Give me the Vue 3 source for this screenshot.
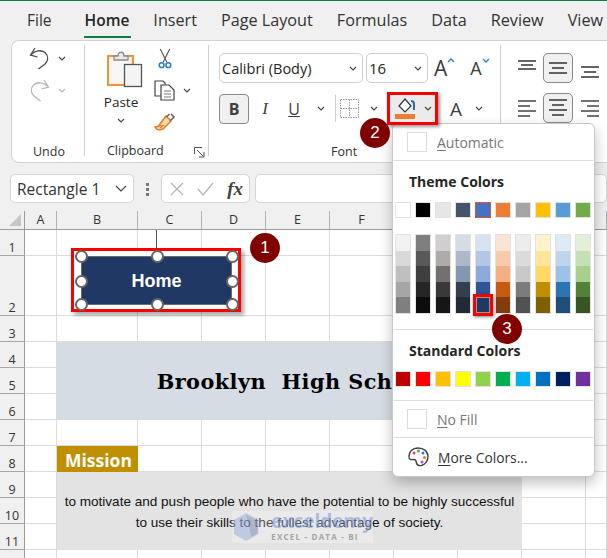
<script setup>
const tabs = ['File', 'Home', 'Insert', 'Page Layout', 'Formulas', 'Data', 'Review', 'View']
const colLabels = ['A', 'B', 'C', 'D', 'E', 'F', 'G', 'H', 'I', '']
const rowLabels = [1, 2, 3, 4, 5, 6, 7, 8, 9, 10, 11, 12]
const title = 'Brooklyn  High School'
const theme = ['#ffffff', '#000000', '#e7e6e6', '#44546a', '#4472c4', '#ed7d31', '#a5a5a5', '#ffc000', '#5b9bd5', '#70ad47']
const tints = [
  ['#f2f2f2', '#d9d9d9', '#bfbfbf', '#a6a6a6', '#7f7f7f'],
  ['#7f7f7f', '#595959', '#3f3f3f', '#262626', '#0d0d0d'],
  ['#d0cece', '#aeabab', '#757070', '#3a3838', '#171616'],
  ['#d6dce4', '#adb9ca', '#8497b0', '#333f4f', '#222b35'],
  ['#d9e2f3', '#b4c6e7', '#8eaadb', '#2f5496', '#1f3864'],
  ['#fbe4d5', '#f7caac', '#f4b083', '#c55a11', '#833c0b'],
  ['#ededed', '#dbdbdb', '#c9c9c9', '#7b7b7b', '#525252'],
  ['#fff2cc', '#ffe599', '#ffd966', '#bf8f00', '#7f6000'],
  ['#deeaf6', '#bdd6ee', '#9cc2e5', '#2e74b5', '#1f4e79'],
  ['#e2efd9', '#c5e0b3', '#a8d08d', '#538135', '#375623']
]
const standard = ['#c00000', '#ff0000', '#ffc000', '#ffff00', '#92d050', '#00b050', '#00b0f0', '#0070c0', '#002060', '#7030a0']
const handles = [
  ['h-l', 'h-t'], ['h-c', 'h-t'], ['h-r', 'h-t'],
  ['h-l', 'h-m'], ['h-r', 'h-m'],
  ['h-l', 'h-b'], ['h-c', 'h-b'], ['h-r', 'h-b']
]
</script>

<template>
  <div class="app">
    <nav class="tabs">
      <span v-for="t in tabs" :key="t" class="tab" :class="{ active: t === 'Home' }">{{ t }}</span>
    </nav>

    <section class="ribbon">
      <div class="group g-undo">
        <div class="undo-line">
          <svg width="21" height="23" viewBox="0 0 21 23" fill="none" stroke="#4a4a4a" stroke-width="1.3"><path d="M6 1 1.500 8 8.500 10" /><path d="M2 7.500C6 3.500 12 2.500 16 5.500 20 9.500 19 14 16 17L9.500 22" /></svg>
          <svg class="chev" viewBox="0 0 8 5"><path d="M1 1l3 3 3-3" /></svg>
        </div>
        <div class="undo-line faint">
          <svg width="21" height="23" viewBox="0 0 21 23" fill="none" stroke="#b5b5b5" stroke-width="1.300"><path d="M15 1 19.500 8 12.500 10" /><path d="M19 7.500C15 3.500 9 2.500 5 5.500 1 9.500 2 14 5 17L11.500 22" /></svg>
          <svg class="chev" viewBox="0 0 8 5"><path d="M1 1l3 3 3-3" /></svg>
        </div>
        <span class="group-label">Undo</span>
      </div>

      <div class="group g-clip">
        <div class="clip-top">
          <div class="paste">
            <svg width="36" height="38" viewBox="0 0 36 38">
              <rect x="1" y="6" width="25" height="29" fill="#fdf2dc" stroke="#ee9440" stroke-width="2" />
              <rect x="4" y="9" width="19" height="23" fill="#f7f7f7" />
              <path d="M7 10V6h4c0-5 6-5 6 0h4v4z" fill="#e9e9e9" stroke="#8a8a8a" stroke-width="1.300" />
              <rect x="17.500" y="14.500" width="17" height="22" fill="#f4f4f4" stroke="#555" stroke-width="1.300" />
            </svg>
            <span class="paste-label">Paste</span>
            <svg class="chev" viewBox="0 0 8 5"><path d="M1 1l3 3 3-3" /></svg>
          </div>
          <div class="clip-tools">
            <svg class="scissors" width="16" height="21" viewBox="0 0 16 22" fill="none">
              <path d="M3 1l7 14M13 1L6 15" stroke="#555" stroke-width="1.200" />
              <circle cx="4.500" cy="18" r="2.500" stroke="#2b7cd3" stroke-width="1.600" />
              <circle cx="11.500" cy="18" r="2.500" stroke="#2b7cd3" stroke-width="1.600" />
            </svg>
            <div class="copy-line">
              <svg width="21" height="21" viewBox="0 0 21 21" fill="none" stroke="#444" stroke-width="1.200">
                <path d="M8 16H1V1h8l2 2v2" />
                <path d="M7 5h8l5 5v10H7z" fill="#fff" />
                <path d="M10 11h7M10 14h7M10 17h7" stroke="#777" />
              </svg>
              <svg class="chev" viewBox="0 0 8 5"><path d="M1 1l3 3 3-3" /></svg>
            </div>
            <svg width="22" height="20" viewBox="0 0 22 20">
              <path d="M12 4l5 5-8 8c-3 1-6 2-8-2 3 0 4-1 5-3z" fill="#fbd9b4" stroke="#e67e22" stroke-width="1.500" />
              <path d="M12.500 5l3-3M16 9l4-4-3-3" fill="none" stroke="#666" stroke-width="1.600" />
              <path d="M3 15l5-2M6 16l4-3" stroke="#e67e22" stroke-width="1.200" />
            </svg>
          </div>
        </div>
        <div class="clip-foot">
          <span class="group-label">Clipboard</span>
          <svg width="11" height="11" viewBox="0 0 11 11" fill="none" stroke="#555" stroke-width="1"><path d="M.5 7V.5H8" /><path d="M3 3l6.500 6.500M10 5v5H5" /></svg>
        </div>
      </div>

      <div class="group g-font">
        <div class="font-row">
          <div class="select font-name"><span>Calibri (Body)</span><svg class="chev" viewBox="0 0 8 5"><path d="M1 1l3 3 3-3" /></svg></div>
          <div class="select font-size"><span>16</span><svg class="chev" viewBox="0 0 8 5"><path d="M1 1l3 3 3-3" /></svg></div>
          <span class="big-a grow">A<svg width="8" height="5" viewBox="0 0 8 5" fill="none" stroke="#2b7cd3" stroke-width="1.300"><path d="M1 4l3-3 3 3" /></svg></span>
          <span class="big-a shrink">A<svg width="8" height="5" viewBox="0 0 8 5" fill="none" stroke="#2b7cd3" stroke-width="1.300"><path d="M1 1l3 3 3-3" /></svg></span>
        </div>
        <div class="font-row row-two">
          <span class="fmt bold">B</span>
          <span class="fmt italic">I</span>
          <span class="fmt under">U</span>
          <svg class="chev c-u" viewBox="0 0 8 5"><path d="M1 1l3 3 3-3" /></svg>
          <span class="vsep"></span>
          <svg class="borders" width="19" height="19" viewBox="0 0 19 19" fill="none" stroke="#9a9a9a" stroke-dasharray="1.500 1"><path d="M.5.500h18v18H.5zM9.500.500v18M.5 9.500h18" /></svg>
          <svg class="chev c-b" viewBox="0 0 8 5"><path d="M1 1l3 3 3-3" /></svg>
          <div class="fill-btn">
            <div class="fill-icon">
              <svg class="bucket" width="18" height="15" viewBox="0 0 18 15" fill="none">
                <path d="M7 1l6 7-6 6-6-6z" stroke="#333" stroke-width="1.200" fill="#fff" />
                <path d="M16 12V6c0-2-1-3-3-3" stroke="#2b6cb8" stroke-width="2" />
              </svg>
              <span class="fill-bar"></span>
            </div>
            <svg class="chev" viewBox="0 0 8 5"><path d="M1 1l3 3 3-3" /></svg>
          </div>
          <span class="font-color">A</span>
          <svg class="chev c-a" viewBox="0 0 8 5"><path d="M1 1l3 3 3-3" /></svg>
        </div>
        <span class="group-label font-label">Font</span>
      </div>

      <div class="group g-align">
        <div class="align-row">
          <svg class="al" width="24" height="24" viewBox="0 0 24 24" stroke="#333" stroke-width="1.300"><path d="M1 5h18M4 9h12M1 13h18" /></svg>
          <span class="al-box"><svg width="18" height="14" viewBox="0 0 18 14" stroke="#333" stroke-width="1.300"><path d="M0 2h18M3 7h12M0 12h18" /></svg></span>
          <svg class="al" width="18" height="24" viewBox="0 0 18 24" stroke="#333" stroke-width="1.300"><path d="M0 11h18M3 16h12M0 21h18" /></svg>
        </div>
        <div class="align-row">
          <svg class="al" width="24" height="24" viewBox="0 0 24 24" stroke="#444" stroke-width="1.300"><path d="M1 5h18M1 10h12M1 15h18M1 20h12" /></svg>
          <span class="al-box"><svg width="18" height="18" viewBox="0 0 18 18" stroke="#333" stroke-width="1.300"><path d="M0 1h18M3 6h12M0 11h18M3 16h12" /></svg></span>
          <svg class="al" width="18" height="24" viewBox="0 0 18 24" stroke="#444" stroke-width="1.300"><path d="M0 5h18M6 10h12M0 15h18M6 20h12" /></svg>
        </div>
      </div>
    </section>

    <section class="formula">
      <div class="name-box"><span>Rectangle 1</span><svg width="12" height="7" viewBox="0 0 12 7" fill="none" stroke="#444" stroke-width="1.200"><path d="M1 1l5 5 5-5" /></svg></div>
      <div class="dots"><i></i><i></i><i></i></div>
      <div class="fx-box">
        <svg width="14" height="14" viewBox="0 0 14 14" stroke="#b5b5b5" stroke-width="1.300"><path d="M1 1l12 12M13 1L1 13" /></svg>
        <svg width="17" height="14" viewBox="0 0 17 14" fill="none" stroke="#b5b5b5" stroke-width="1.300"><path d="M1 7l5 6L16 1" /></svg>
        <span class="fx">fx</span>
      </div>
      <div class="input-box"></div>
    </section>

    <section class="sheet">
      <div class="corner"><span class="tri"></span></div>
      <div v-for="(c, i) in colLabels" :key="i" class="col-head" :style="{ gridColumn: i + 2, gridRow: 1 }">{{ c }}</div>
      <div v-for="(r, i) in rowLabels" :key="r" class="row-head" :style="{ gridColumn: 1, gridRow: i + 2 }">{{ r === 12 ? '' : r }}</div>
      <template v-for="(r, ri) in rowLabels" :key="'r' + r">
        <div v-for="(c, ci) in colLabels" :key="ci + '-' + r" class="cell" :style="{ gridColumn: ci + 2, gridRow: ri + 2 }"></div>
      </template>
      <div class="banner"><span>{{ title }}</span></div>
      <div class="mission">Mission</div>
      <div class="statement">
        <p>to motivate and push people who have the potential to be highly successful</p>
        <p>to use their skills to the fullest advantage of society.</p>
      </div>
    </section>

    <div class="watermark">
      <svg width="30" height="32" viewBox="0 0 30 32"><path d="M15 0l14 8v16l-14 8L1 24V8z" fill="#7d9ad8" opacity=".4" /><path d="M15 2l13 7v14l-7 4z" fill="#666" opacity=".2" /></svg>
      <div class="wm-text"><span class="wm-name">exceldemy</span><span class="wm-sub">EXCEL - DATA - BI</span></div>
    </div>

    <i class="rotate-line"></i>
    <div class="shape-select">
      <div class="shape">Home</div>
    </div>
    <span v-for="(h, i) in handles" :key="i" class="handle" :class="h"></span>

    <div class="menu">
      <div class="m-row m-auto"><span class="check"></span><span class="m-text dim"><u>A</u>utomatic</span></div>
      <h4 class="m-head">Theme Colors</h4>
      <div class="swatches">
        <span v-for="(c, i) in theme" :key="c" class="swatch" :class="{ current: i === 4 }" :style="{ background: c }"></span>
      </div>
      <div class="tints">
        <div v-for="(col, i) in tints" :key="i" class="tint-col">
          <span v-for="(c, j) in col" :key="c + j" class="tint" :style="{ background: c }">
            <b v-if="i === 4 && j === 4" class="tint-sel"></b>
          </span>
        </div>
      </div>
      <h4 class="m-head m-head-std">Standard Colors</h4>
      <div class="swatches">
        <span v-for="c in standard" :key="c" class="swatch" :style="{ background: c }"></span>
      </div>
      <div class="m-row m-nofill"><span class="check"></span><span class="m-text dim"><u>N</u>o Fill</span></div>
      <div class="m-row m-more">
        <svg width="21" height="20" viewBox="0 0 21 20">
          <path d="M10 1C4 1 1 5 1 9.500c0 4 3 3 5 3 2.500 0 2 2 2.500 3.500.5 2 2.500 3 5 2.500 4-1 6.500-5 6.500-9C20 4.500 16 1 10 1z" fill="#fff" stroke="#444" stroke-width="1.400" />
          <circle cx="6" cy="6" r="1.500" fill="#d9534f" />
          <circle cx="10.500" cy="4" r="1.500" fill="#4caf50" />
          <circle cx="15" cy="6" r="1.500" fill="#2b7cd3" />
          <circle cx="16.500" cy="10.500" r="1.500" fill="#ed7d31" />
          <circle cx="14" cy="15" r="1.500" fill="#a05fc0" />
        </svg>
        <span class="m-text"><u>M</u>ore Colors...</span>
      </div>
    </div>

    <span class="badge b1">1</span>
    <span class="badge b2">2</span>
    <span class="badge b3">3</span>
  </div>
</template>

<style>
html, body { margin: 0; padding: 0; background: #fff; }
</style>

<style scoped>
* { box-sizing: border-box; }
.app {
  position: relative;
  width: 607px;
  height: 558px;
  overflow: hidden;
  background: #f0f0f0;
  font-family: "Open Sans", "Noto Sans", sans-serif;
  color: #262626;
}
.tabs {
  height: 40px;
  border-top: 1px solid #107c41;
  padding-left: 27px;
  display: flex;
  gap: 24px;
  white-space: nowrap;
}
.tab {
  position: relative;
  font-size: 16.200px;
  line-height: 38px;
  color: #333;
}
.tab:first-child { margin-right: 9px; font-size: 15.500px; }
.tab.active { font-weight: 600; font-size: 15.500px; color: #262626; }
.tab.active::after {
  content: "";
  position: absolute;
  left: -1px;
  right: -2px;
  bottom: 2px;
  height: 2.500px;
  background: #107c41;
}
.ribbon {
  margin-left: 11px;
  width: 620px;
  height: 123px;
  background: #fff;
  border: 1px solid #d2d2d2;
  border-radius: 8px;
  display: flex;
  padding-top: 4px;
}
.group {
  position: relative;
  height: 111px;
  border-right: 1px solid #cfcfcf;
}
.group-label { font-size: 12.500px; color: #333; line-height: 16px; }
.chev { width: 8px; height: 5px; fill: none; stroke: #444; stroke-width: 1.200; flex: none; }

.g-undo { width: 73px; padding: 2px 0 0 17px; display: flex; flex-direction: column; }
.undo-line { display: flex; align-items: center; gap: 8px; height: 23px; margin-bottom: 9px; }
.undo-line.faint .chev { stroke: #b5b5b5; }
.g-undo .group-label { margin: 33px 0 0 4px; }

.g-clip { width: 124px; padding: 5px 0 0 22px; display: flex; flex-direction: column; }
.clip-top { display: flex; gap: 9px; height: 87px; flex: none; }
.paste { width: 36px; display: flex; flex-direction: column; align-items: center; }
.paste-label { font-size: 13.500px; line-height: 18px; margin: 5px 8px 0 0; }
.paste .chev { margin: 7px 8px 0 0; }
.clip-tools { display: flex; flex-direction: column; gap: 11px; padding-left: 2px; margin-top: -2px; }
.scissors { margin-left: 3px; }
.copy-line { display: flex; align-items: center; gap: 8px; }
.clip-foot { display: flex; align-items: center; justify-content: space-between; padding: 0 3px 0 0; margin-top: 6px; }
.clip-foot svg { margin-top: 2px; }

.g-font { width: 292px; padding: 8px 0 0 10px; }
.font-row { display: flex; align-items: center; height: 30px; }
.row-two { margin-top: 10px; height: 31px; }
.select {
  height: 30px;
  background: #fff;
  border: 1px solid #d0d0d0;
  border-radius: 5px;
  display: flex;
  align-items: center;
  justify-content: space-between;
  padding: 0 5px 0 2px;
  font-size: 14.500px;
}
.font-name { width: 144px; margin-right: 3px; }
.font-size { width: 62px; padding-left: 2px; font-size: 15px; }
.big-a { font-size: 21px; line-height: 26px; display: flex; align-items: flex-start; color: #3a3a3a; }
.big-a svg { margin-top: 3px; }
.grow { margin-left: 6px; }
.shrink { margin-left: 15px; font-size: 18px; }
.fmt { display: block; text-align: center; font-size: 16px; color: #404040; }
.bold {
  width: 30px; height: 30px; line-height: 28px;
  background: #f0f0f0; border: 1px solid #8a8a8a; border-radius: 4px; font-weight: 700;
}
.italic { width: 30px; margin-left: 1px; font-family: "Liberation Serif", serif; font-style: italic; font-size: 17px; }
.under { width: 28px; text-decoration: underline; }
.c-u { margin-left: 9px; }
.vsep { width: 1px; height: 27px; background: #cfcfcf; margin-left: 10px; }
.borders { margin-left: 4px; }
.c-b { margin-left: 11px; }
.fill-btn {
  width: 51px;
  height: 33px;
  margin-left: 9px;
  border: 3px solid #f80000;
  background: #ebebeb;
  box-shadow: 2px 2px 3px rgba(0, 0, 0, .4);
  display: flex;
  align-items: center;
  gap: 9px;
  padding-left: 5px;
  position: relative;
  z-index: 1;
}
.fill-icon { display: flex; flex-direction: column; align-items: flex-start; gap: 1px; width: 20px; }
.bucket { margin-left: 3px; }
.fill-bar { width: 20px; height: 5px; background: #ed7d31; }
.font-color { font-size: 19px; margin-left: 12px; color: #404040; }
.c-a { margin-left: 13px; }
.font-label { position: absolute; left: 122px; top: 99px; }

.g-align { border-right: 0; padding: 8px 0 0 16px; }
.align-row { display: flex; align-items: center; height: 30px; margin-bottom: 10px; }
.al-box {
  width: 30px; height: 30px;
  margin-left: 2px; margin-right: 8px;
  background: #f0f0f0; border: 1px solid #8a8a8a; border-radius: 5px;
  display: flex; align-items: center; justify-content: center;
}

.formula {
  height: 48px;
  padding: 11px 0 0 10px;
  display: flex;
  align-items: flex-start;
}
.name-box, .fx-box, .input-box {
  height: 29px;
  background: #fff;
  border: 1px solid #d6d6d6;
  border-radius: 5px;
  display: flex;
  align-items: center;
}
.name-box { width: 127px; padding: 0 6px 0 6px; justify-content: space-between; font-size: 15.500px; color: #333; }
.dots { width: 27px; display: flex; flex-direction: column; align-items: center; gap: 2px; padding-top: 9px; }
.dots i { width: 3px; height: 3px; background: #777; }
.fx-box { width: 91px; padding: 0 6px 0 8px; justify-content: space-between; }
.fx { font-family: "Liberation Serif", serif; font-style: italic; font-weight: 700; font-size: 19px; color: #444; line-height: 24px; }
.input-box { width: 360px; margin-left: 5px; }

.sheet {
  height: 347px;
  display: grid;
  grid-template-columns: 25px 32px 81px repeat(7, 64px);
  grid-template-rows: 19px 26px 60px repeat(10, 26px);
  background: #fff;
}
.corner { grid-column: 1; grid-row: 1; position: relative; background: #f0f0f0; border-right: 1px solid #9c9c9c; border-bottom: 1px solid #9c9c9c; }
.tri { position: absolute; right: 3px; bottom: 3px; width: 0; height: 0; border-left: 12px solid transparent; border-bottom: 12px solid #c6c6c6; }
.col-head {
  background: #f0f0f0;
  border-right: 1px solid #b0b0b0;
  border-bottom: 1px solid #9c9c9c;
  font-size: 12.500px;
  line-height: 18px;
  text-align: center;
  color: #333;
}
.row-head {
  background: #f0f0f0;
  border-right: 1px solid #9c9c9c;
  border-bottom: 1px solid #a6a6a6;
  font-size: 12.500px;
  line-height: 15px;
  display: flex;
  align-items: flex-end;
  justify-content: center;
  color: #333;
}
.cell { border-right: 1px solid #dcdcdc; border-bottom: 1px solid #dcdcdc; }
.banner {
  grid-column: 3 / 10;
  grid-row: 5 / 8;
  background: #d6dce4;
  display: flex;
  align-items: center;
  justify-content: center;
  padding-left: 7px;
  font-family: "DejaVu Serif", serif;
  font-weight: 700;
  font-size: 20.800px;
  letter-spacing: .45px;
  color: #000;
  white-space: pre;
}
.mission {
  grid-column: 3;
  grid-row: 9;
  background: #bf8f00;
  color: #fff;
  font-weight: 700;
  font-size: 17.500px;
  line-height: 28px;
  padding-left: 8px;
}
.statement {
  grid-column: 3 / 10;
  grid-row: 10 / 13;
  background: #e3e3e3;
  font-family: "Liberation Sans", sans-serif;
  font-size: 13.550px;
  color: #111;
  text-align: center;
  padding-top: 19px;
}
.statement p { margin: 0; line-height: 21px; }

.watermark {
  position: absolute;
  left: 232px;
  top: 511px;
  width: 141px;
  height: 32px;
  background: rgba(255, 255, 255, .25);
  display: flex;
  gap: 4px;
  padding-left: 1px;
}
.wm-text { display: flex; flex-direction: column; padding-left: 8px; }
.wm-name { font-size: 19px; font-weight: 700; line-height: 21px; color: #6f8fd8; opacity: .5; }
.wm-sub { font-size: 8px; font-weight: 700; letter-spacing: 1.200px; line-height: 9px; color: #a4a4a4; }

.rotate-line { position: absolute; left: 156px; top: 230px; width: 1px; height: 18px; background: #555; }
.shape-select {
  position: absolute;
  left: 71px;
  top: 248px;
  width: 170px;
  height: 64px;
  border: 3px solid #f80000;
  background: #fff;
  box-shadow: 3px 3px 4px rgba(0, 0, 0, .35);
  padding: 5px 6px 4px 7px;
}
.shape {
  height: 100%;
  background: #203864;
  border: 1.500px solid #6a6a6a;
  color: #fff;
  font-family: "Liberation Sans", sans-serif;
  font-weight: 700;
  font-size: 18px;
  display: flex;
  align-items: center;
  justify-content: center;
  padding-top: 2px;
}
.handle {
  position: absolute;
  width: 13px;
  height: 13px;
  border-radius: 50%;
  background: #fff;
  border: 2.500px solid #666;
}
.h-l { left: 75px; }
.h-c { left: 150.500px; }
.h-r { left: 225.500px; }
.h-t { top: 249.500px; }
.h-m { top: 274.500px; }
.h-b { top: 298px; }

.menu {
  position: absolute;
  left: 392px;
  top: 123px;
  width: 203px;
  height: 354px;
  background: #fff;
  border: 1px solid #c8c8c8;
  border-radius: 6px;
  box-shadow: 0 6px 14px rgba(0, 0, 0, .25);
  display: flex;
  flex-direction: column;
  padding: 0 1px;
}
.m-row { display: flex; align-items: center; padding-left: 13px; }
.m-auto { height: 37px; border-bottom: 1px solid #dedede; flex: none; }
.check { width: 20px; height: 20px; border: 1px solid #dcdcdc; }
.m-text { margin-left: 10px; font-size: 14px; color: #333; }
.m-text.dim { color: #777; }
.m-text u { text-underline-offset: 2px; }
.m-head {
  margin: 0;
  height: 41px;
  flex: none;
  padding-left: 15px;
  font-size: 14px;
  font-weight: 700;
  line-height: 41px;
  color: #262626;
}
.m-head-std { height: 42px; border-top: 1px solid #dedede; margin-top: 15px; line-height: 42px; }
.swatches { display: flex; gap: 4px; padding-left: 1px; height: 16px; flex: none; }
.swatch { width: 16px; height: 16px; border: 1px solid #e2e2e2; position: relative; }
.swatch.current { outline: 1.500px solid #e8541a; border: 1px solid #fff; outline-offset: -1px; }
.tints { display: flex; gap: 4px; padding-left: 1px; margin-top: 16px; height: 80px; flex: none; }
.tint-col { width: 16px; height: 80px; border: 1px solid #e2e2e2; display: flex; flex-direction: column; }
.tint { flex: 1; position: relative; display: block; }
.tint-sel {
  position: absolute;
  left: -3px;
  right: -3px;
  top: -3px;
  bottom: -3px;
  display: block;
  border: 3px solid #f80000;
  background: #1f3864;
  box-shadow: inset 0 0 0 1px #999, 1px 1px 3px rgba(0, 0, 0, .5);
}
.m-nofill { height: 38px; flex: none; margin-top: 13px; border-top: 1px solid #dedede; border-bottom: 1px solid #dedede; }
.m-more { height: 38px; flex: none; padding-left: 14px; }
.m-more .m-text { margin-left: 9px; font-size: 13.800px; }

.badge {
  position: absolute;
  width: 30px;
  height: 30px;
  border-radius: 50%;
  background: #800000;
  color: #fff;
  font-family: "Liberation Sans", sans-serif;
  font-size: 17px;
  line-height: 30px;
  text-align: center;
}
.b1 { left: 250px; top: 233px; }
.b2 { left: 360px; top: 118px; }
.b3 { left: 492px; top: 314px; }
</style>
